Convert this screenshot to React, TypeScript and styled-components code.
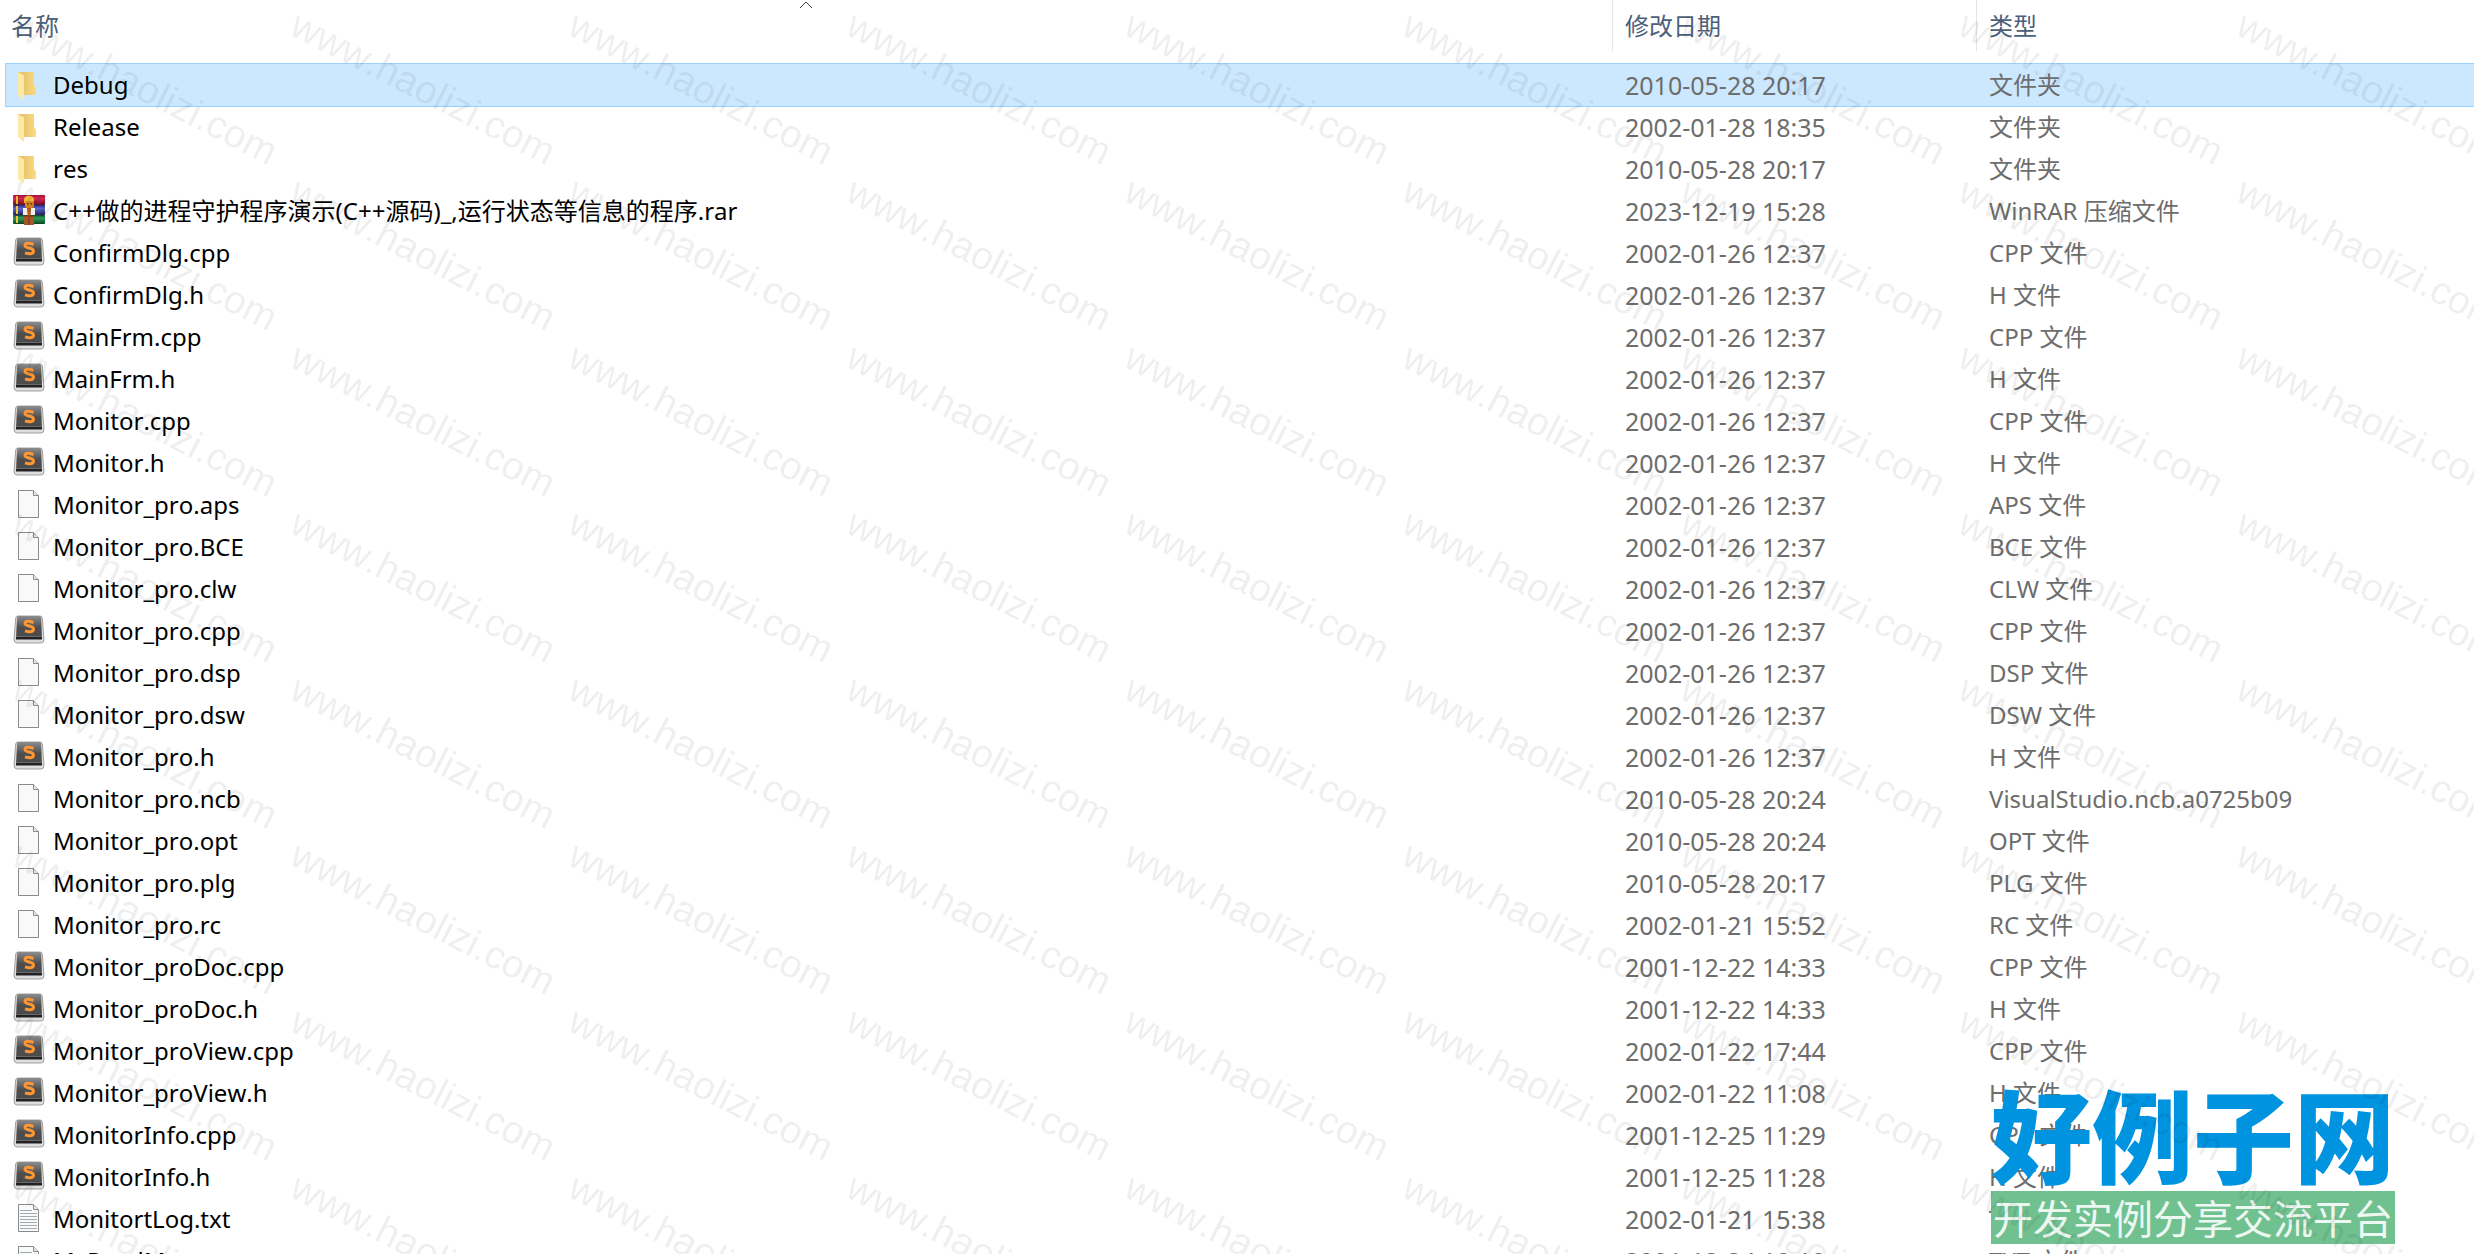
import React from "react";
import styled, { createGlobalStyle } from "styled-components";

type Kind = "folder" | "rar" | "sublime" | "blank" | "text";
interface Entry {
  name: string;
  date: string;
  type: string;
  kind: Kind;
}

const e = (kind: Kind, name: string, date: string, type: string): Entry => ({ kind, name, date, type });

const entries: Entry[] = [
  e("folder", "Debug", "2010-05-28 20:17", "文件夹"),
  e("folder", "Release", "2002-01-28 18:35", "文件夹"),
  e("folder", "res", "2010-05-28 20:17", "文件夹"),
  e("rar", "C++做的进程守护程序演示(C++源码)_,运行状态等信息的程序.rar", "2023-12-19 15:28", "WinRAR 压缩文件"),
  e("sublime", "ConfirmDlg.cpp", "2002-01-26 12:37", "CPP 文件"),
  e("sublime", "ConfirmDlg.h", "2002-01-26 12:37", "H 文件"),
  e("sublime", "MainFrm.cpp", "2002-01-26 12:37", "CPP 文件"),
  e("sublime", "MainFrm.h", "2002-01-26 12:37", "H 文件"),
  e("sublime", "Monitor.cpp", "2002-01-26 12:37", "CPP 文件"),
  e("sublime", "Monitor.h", "2002-01-26 12:37", "H 文件"),
  e("blank", "Monitor_pro.aps", "2002-01-26 12:37", "APS 文件"),
  e("blank", "Monitor_pro.BCE", "2002-01-26 12:37", "BCE 文件"),
  e("blank", "Monitor_pro.clw", "2002-01-26 12:37", "CLW 文件"),
  e("sublime", "Monitor_pro.cpp", "2002-01-26 12:37", "CPP 文件"),
  e("blank", "Monitor_pro.dsp", "2002-01-26 12:37", "DSP 文件"),
  e("blank", "Monitor_pro.dsw", "2002-01-26 12:37", "DSW 文件"),
  e("sublime", "Monitor_pro.h", "2002-01-26 12:37", "H 文件"),
  e("blank", "Monitor_pro.ncb", "2010-05-28 20:24", "VisualStudio.ncb.a0725b09"),
  e("blank", "Monitor_pro.opt", "2010-05-28 20:24", "OPT 文件"),
  e("blank", "Monitor_pro.plg", "2010-05-28 20:17", "PLG 文件"),
  e("blank", "Monitor_pro.rc", "2002-01-21 15:52", "RC 文件"),
  e("sublime", "Monitor_proDoc.cpp", "2001-12-22 14:33", "CPP 文件"),
  e("sublime", "Monitor_proDoc.h", "2001-12-22 14:33", "H 文件"),
  e("sublime", "Monitor_proView.cpp", "2002-01-22 17:44", "CPP 文件"),
  e("sublime", "Monitor_proView.h", "2002-01-22 11:08", "H 文件"),
  e("sublime", "MonitorInfo.cpp", "2001-12-25 11:29", "CPP 文件"),
  e("sublime", "MonitorInfo.h", "2001-12-25 11:28", "H 文件"),
  e("text", "MonitortLog.txt", "2002-01-21 15:38", "TXT 文件"),
  e("text", "MyReadMe.txt", "2001-12-24 10:10", "TXT 文件"),
];

const GlobalStyle = createGlobalStyle`
  body {
    margin: 0;
    background: #fff;
    font-family: "Noto Sans", "Noto Sans CJK SC", sans-serif;
    font-kerning: none;
  }
`;

const Page = styled.main`
  position: relative;
  box-sizing: border-box;
  height: 100vh;
  padding-left: 6px;
  overflow: hidden;
`;

const FileTable = styled.table`
  width: 100%;
  table-layout: fixed;
  border-collapse: separate;
  border-spacing: 0;
  font-size: 24px;
  line-height: 42px;
`;

const NameColumn = styled.col`
  width: auto;
`;
const DateColumn = styled.col`
  width: 364px;
`;
const TypeColumn = styled.col`
  width: 498px;
`;

const Heading = styled.th<{ $divided?: boolean }>`
  position: relative;
  height: 64px;
  padding: 0 13px;
  padding-left: ${(p) => (p.$divided ? 13 : 5)}px;
  vertical-align: top;
  text-align: left;
  font-weight: 400;
  line-height: 52px;
  color: #4c607a;
  background: ${(p) => (p.$divided ? "linear-gradient(#e5e5e5, #e5e5e5) left top / 1px 51px no-repeat" : "none")};
`;

const SortMark = styled.svg`
  position: absolute;
  top: 0;
  left: calc(50% - 10px);
`;

const Row = styled.tr<{ $selected: boolean }>`
  height: 42px;
  background: ${(p) => (p.$selected ? "#cce8ff" : "transparent")};
  outline: ${(p) => (p.$selected ? "1px solid #99d1ff" : "none")};
`;

const Cell = styled.td`
  padding: 0 13px;
  white-space: nowrap;
  color: #6d6d6d;
`;

const DateCell = styled(Cell)`
  font-size: 25px;
`;

const NameCell = styled(Cell)`
  padding-left: 7px;
  color: #000;
`;

const FileLabel = styled.div`
  display: flex;
  align-items: center;
  gap: 8px;
`;

const Icon = styled.svg`
  flex: none;
  width: 32px;
  height: 32px;
`;

const Brand = styled.aside`
  position: absolute;
  right: 79px;
  bottom: 10px;
  display: flex;
  flex-direction: column;
  gap: 3px;
  text-align: center;
  white-space: nowrap;
  font-family: "Noto Sans CJK SC", sans-serif;
`;

const BrandName = styled.strong`
  font-size: 101px;
  font-weight: 900;
  line-height: 112px;
  color: #0093df;
`;

const BrandTag = styled.span`
  font-size: 40px;
  font-weight: 400;
  line-height: 53px;
  color: #eef8f2;
  background: #70c18f;
`;

const Watermarks = styled.div`
  position: absolute;
  inset: 0;
  display: grid;
  grid-template-columns: repeat(auto-fill, 278px);
  grid-auto-rows: 166px;
  padding: 8px 0 0 23px;
  margin-right: -278px;
  overflow: hidden;
  pointer-events: none;
  font-family: "Liberation Sans", Arial, sans-serif;
  font-size: 39px;
  line-height: 32px;
  color: rgba(0, 0, 0, 0.08);
`;

const Watermark = styled.span`
  white-space: nowrap;
  transform: rotate(27deg);
  transform-origin: 0 0;
`;

function FileIcon({ kind }: { kind: Kind }) {
  if (kind === "folder") {
    return (
      <Icon viewBox="0 0 32 32" aria-hidden="true">
        <path d="M5 3h16v13l2 3v7H5z" fill="url(#folderBack)" />
        <path d="M5 3l6 3.500V30l-1 .5L5 26z" fill="#ffe8a6" />
      </Icon>
    );
  }
  if (kind === "rar") {
    return (
      <Icon viewBox="0 0 32 32" aria-hidden="true">
        <rect x="0" y="0" width="32" height="10" rx="1" fill="url(#rarRed)" />
        <rect x="0" y="10" width="32" height="10" rx="1" fill="url(#rarBlue)" />
        <rect x="0" y="20" width="32" height="9" rx="1" fill="url(#rarGreen)" />
        <path d="M3 1h2v8H3zM3 11h2v8H3zM3 21h2v7H3z" fill="#f0c530" />
        <path d="M0 10h32M0 20h32" stroke="#2a2a35" strokeWidth=".6" />
        <path d="M11 5q0-4 5-4.500 5 .5 5 4.500v3H11z" fill="#f2b632" />
        <path d="M12 6h9v5l-2 3h-5l-2-3z" fill="#d88624" />
        <path d="M14 8h1.500v1.500H14zM17.500 8H19v1.500h-1.500z" fill="#5c2c10" />
        <path d="M10 13h4l1 7h-5zM18 13h4v7h-5z" fill="#f3eee8" />
        <path d="M14 13h4l-.5 8H15z" fill="#b35a1c" />
        <path d="M11 21h10v9H11z" fill="#a8552a" />
        <path d="M11 21h10M16 22v8" stroke="#74330f" />
      </Icon>
    );
  }
  if (kind === "sublime") {
    return (
      <Icon viewBox="0 2 32 32" aria-hidden="true">
        <path d="M5 3h22q2 0 2.300 2L31 26q.3 4-3 4H4q-3 0-3-4L2.700 5Q3 3 5 3z" fill="#dedede" stroke="#8c8c8c" strokeWidth=".8" />
        <path d="M6 3h20q2 0 2.200 2L29 26H3L4 5q.2-2 2-2z" fill="url(#keyFace)" />
        <path d="M3 24h26v2.500H3z" fill="#222" />
        <path d="M3 23.500h26" stroke="#777" strokeWidth=".7" />
        <path d="M20.500 9.500Q12 6.500 12 10.500c0 3 8.500 2 8.500 5.500 0 3.500-5 3-8.500 1.800" fill="none" stroke="#ff9633" strokeWidth="3" />
      </Icon>
    );
  }
  return (
    <Icon viewBox="1 1 32 32" aria-hidden="true">
      <path d="M6.500 2.500h15l5 5v22h-20z" fill="#f7f9fa" stroke="#8a8a8a" />
      <path d="M21.500 2.500v5h5" fill="#e4e6e8" stroke="#8a8a8a" />
      {kind === "text" && (
        <path d="M8 8.500h12M8 11.500h17M8 14.500h17M8 17.500h17M8 20.500h17M8 23.500h17M8 26.500h17" stroke="#a3aaae" />
      )}
    </Icon>
  );
}

const GradientStore = styled.svg`
  position: absolute;
  width: 0;
  height: 0;
`;

const Gradients = () => (
  <GradientStore aria-hidden="true">
    <defs>
      <linearGradient id="folderBack">
        <stop offset=".3" stopColor="#e8c670" />
        <stop offset="1" stopColor="#fbda80" />
      </linearGradient>
      <linearGradient id="keyFace" x2="0" y2="1">
        <stop offset="0" stopColor="#8c8c8c" />
        <stop offset=".5" stopColor="#4e4e4e" />
        <stop offset="1" stopColor="#4a4a4a" />
      </linearGradient>
      <linearGradient id="rarRed" x2="0" y2="1">
        <stop offset="0" stopColor="#a3103a" />
        <stop offset=".35" stopColor="#d82a52" />
        <stop offset="1" stopColor="#700a26" />
      </linearGradient>
      <linearGradient id="rarBlue" x2="0" y2="1">
        <stop offset="0" stopColor="#2c2f8c" />
        <stop offset=".35" stopColor="#5a66cc" />
        <stop offset="1" stopColor="#202268" />
      </linearGradient>
      <linearGradient id="rarGreen" x2="0" y2="1">
        <stop offset="0" stopColor="#0b5a2c" />
        <stop offset=".35" stopColor="#2f9c58" />
        <stop offset="1" stopColor="#08451f" />
      </linearGradient>
    </defs>
  </GradientStore>
);

export default function App() {
  return (
    <Page>
      <GlobalStyle />
      <Gradients />
      <FileTable>
        <colgroup>
          <NameColumn />
          <DateColumn />
          <TypeColumn />
        </colgroup>
        <thead>
          <tr>
            <Heading scope="col" aria-sort="ascending">
              名称
              <SortMark width="14" height="9" viewBox="0 0 14 9" aria-hidden="true">
                <path d="M1 8l6-6 6 6" fill="none" stroke="#444" />
              </SortMark>
            </Heading>
            <Heading scope="col" $divided>修改日期</Heading>
            <Heading scope="col" $divided>类型</Heading>
          </tr>
        </thead>
        <tbody>
          {entries.map((entry, i) => (
            <Row key={entry.name} $selected={i === 0}>
              <NameCell>
                <FileLabel>
                  <FileIcon kind={entry.kind} />
                  {entry.name}
                </FileLabel>
              </NameCell>
              <DateCell>{entry.date}</DateCell>
              <Cell>{entry.type}</Cell>
            </Row>
          ))}
        </tbody>
      </FileTable>
      <Brand>
        <BrandName>好例子网</BrandName>
        <BrandTag>开发实例分享交流平台</BrandTag>
      </Brand>
      <Watermarks aria-hidden="true">
        {Array.from({ length: 72 }, (_, i) => (
          <Watermark key={i}>www.haolizi.com</Watermark>
        ))}
      </Watermarks>
    </Page>
  );
}
